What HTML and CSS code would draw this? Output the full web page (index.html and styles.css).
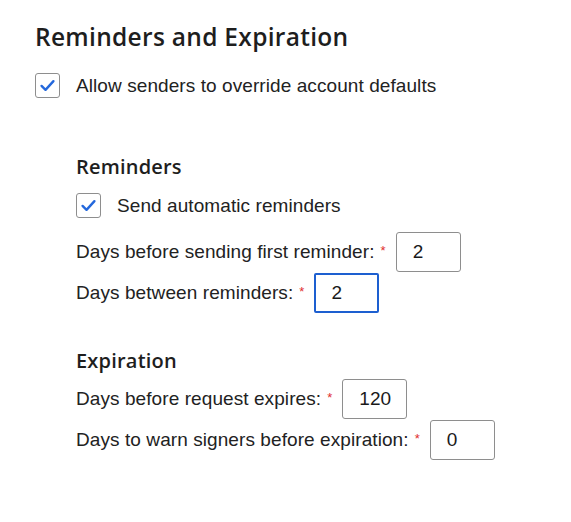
FILE: index.html
```html
<!DOCTYPE html>
<html>
<head>
<meta charset="utf-8">
<link rel="stylesheet" href="styles.css">
</head>
<body>
<div class="page">
  <h1 class="title">Reminders and Expiration</h1>
  <label class="check-row">
    <span class="box"><svg viewBox="0 0 24 24" width="19" height="19"><path d="M4.5 12.5 L9.5 17.5 L19.5 6.5" fill="none" stroke="#2468dc" stroke-width="3" stroke-linecap="round" stroke-linejoin="round"/></svg></span>
    <span class="check-text">Allow senders to override account defaults</span>
  </label>

  <section class="group group-reminders">
    <h2 class="subtitle">Reminders</h2>
    <label class="check-row">
      <span class="box"><svg viewBox="0 0 24 24" width="19" height="19"><path d="M4.5 12.5 L9.5 17.5 L19.5 6.5" fill="none" stroke="#2468dc" stroke-width="3" stroke-linecap="round" stroke-linejoin="round"/></svg></span>
      <span class="check-text">Send automatic reminders</span>
    </label>
    <div class="field first-field">
      <span class="label">Days before sending first reminder:</span><span class="req">*</span>
      <span class="input">2</span>
    </div>
    <div class="field">
      <span class="label">Days between reminders:</span><span class="req">*</span>
      <span class="input focused">2</span>
    </div>
  </section>

  <section class="group group-expiration">
    <h2 class="subtitle">Expiration</h2>
    <div class="field first-field-exp">
      <span class="label">Days before request expires:</span><span class="req">*</span>
      <span class="input">120</span>
    </div>
    <div class="field">
      <span class="label">Days to warn signers before expiration:</span><span class="req">*</span>
      <span class="input">0</span>
    </div>
  </section>
</div>
</body>
</html>
```

FILE: styles.css
```css
html, body {
  margin: 0;
  padding: 0;
  background: #ffffff;
}
body {
  font-family: "Liberation Sans", Arial, sans-serif;
  color: #222222;
}
.page {
  padding: 20px 0 0 35px;
}
.title {
  font-family: "Open Sans", "DejaVu Sans", sans-serif;
  font-weight: 600;
  font-size: 24.5px;
  line-height: 34px;
  margin: 0;
  color: #1e1e1e;
  letter-spacing: 0.3px;
}
.check-row {
  display: flex;
  align-items: center;
  height: 25px;
}
.page > .check-row {
  margin-top: 19px;
}
.box {
  width: 23px;
  height: 23px;
  border: 1px solid #8e8e8e;
  border-radius: 3px;
  display: flex;
  align-items: center;
  justify-content: center;
  background: #fff;
}
.check-text {
  font-size: 19px;
  letter-spacing: 0.08px;
  margin-left: 16px;
}
.group {
  padding-left: 41px;
}
.group-reminders {
  margin-top: 55px;
}
.group-expiration {
  margin-top: 34px;
}
.subtitle {
  font-family: "Open Sans", "DejaVu Sans", sans-serif;
  font-weight: 600;
  font-size: 20px;
  line-height: 28px;
  margin: 0;
  color: #1e1e1e;
  letter-spacing: 0.2px;
}
.group-reminders .check-row {
  margin-top: 12px;
}
.field {
  display: flex;
  align-items: center;
  height: 40px;
  margin-bottom: 1px;
  font-size: 19px;
  letter-spacing: 0.08px;
}
.first-field {
  margin-top: 14px;
}
.first-field-exp {
  margin-top: 4px;
}
.req {
  color: #e02d2d;
  font-size: 13px;
  align-self: flex-start;
  margin-top: 11px;
  margin-left: 6px;
}
.input {
  box-sizing: border-box;
  width: 65px;
  height: 40px;
  border: 1px solid #8e8e8e;
  border-radius: 3px;
  margin-left: 10px;
  padding-left: 16px;
  display: flex;
  align-items: center;
  font-size: 19px;
  color: #1a1a1a;
}
.input.focused {
  border: 2px solid #1d5fd0;
  border-radius: 2px;
  padding-left: 15px;
}
```
